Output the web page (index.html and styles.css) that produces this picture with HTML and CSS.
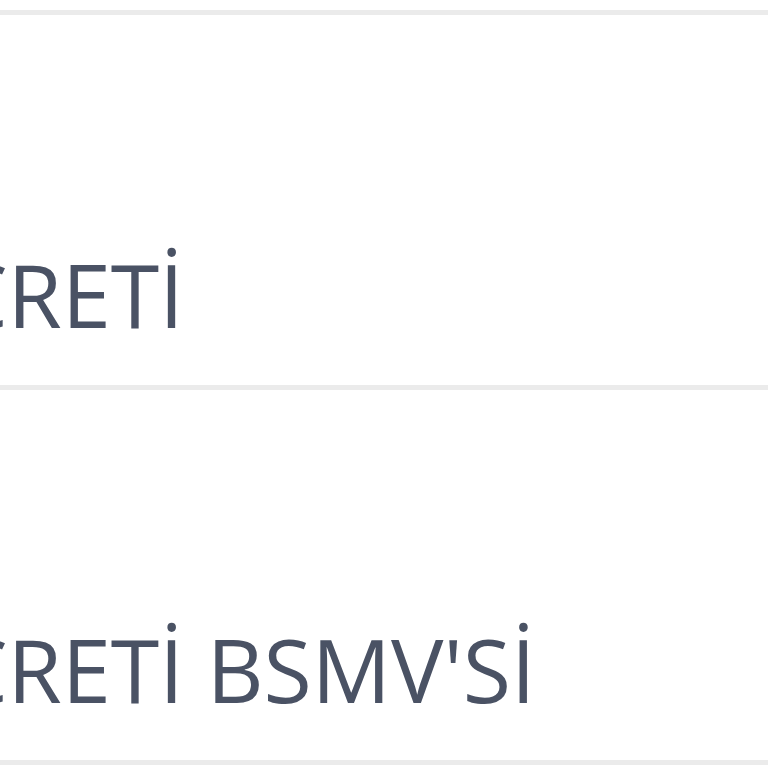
FILE: index.html
```html
<!DOCTYPE html>
<html lang="tr">
<head>
<meta charset="utf-8">
<link rel="stylesheet" href="styles.css">
</head>
<body>
<div class="table">
  <div class="row"><span class="cell">ÜCRETİ</span></div>
  <div class="row"><span class="cell">ÜCRETİ BSMV'Sİ</span></div>
</div>
</body>
</html>
```
FILE: styles.css
```css
html, body {
  margin: 0;
  padding: 0;
  background: #ffffff;
  overflow: hidden;
}
.table {
  margin-top: 10px;
  border-top: 5px solid #ebebeb;
  overflow: hidden;
}
.row {
  box-sizing: border-box;
  height: 375px;
  border-bottom: 5px solid #ebebeb;
  display: flex;
  align-items: flex-end;
  padding-bottom: 47px;
}
.cell {
  font-family: "Open Sans", sans-serif;
  font-size: 88px;
  line-height: 1;
  color: #4a5264;
  white-space: nowrap;
  margin-left: -112px;
}
```
